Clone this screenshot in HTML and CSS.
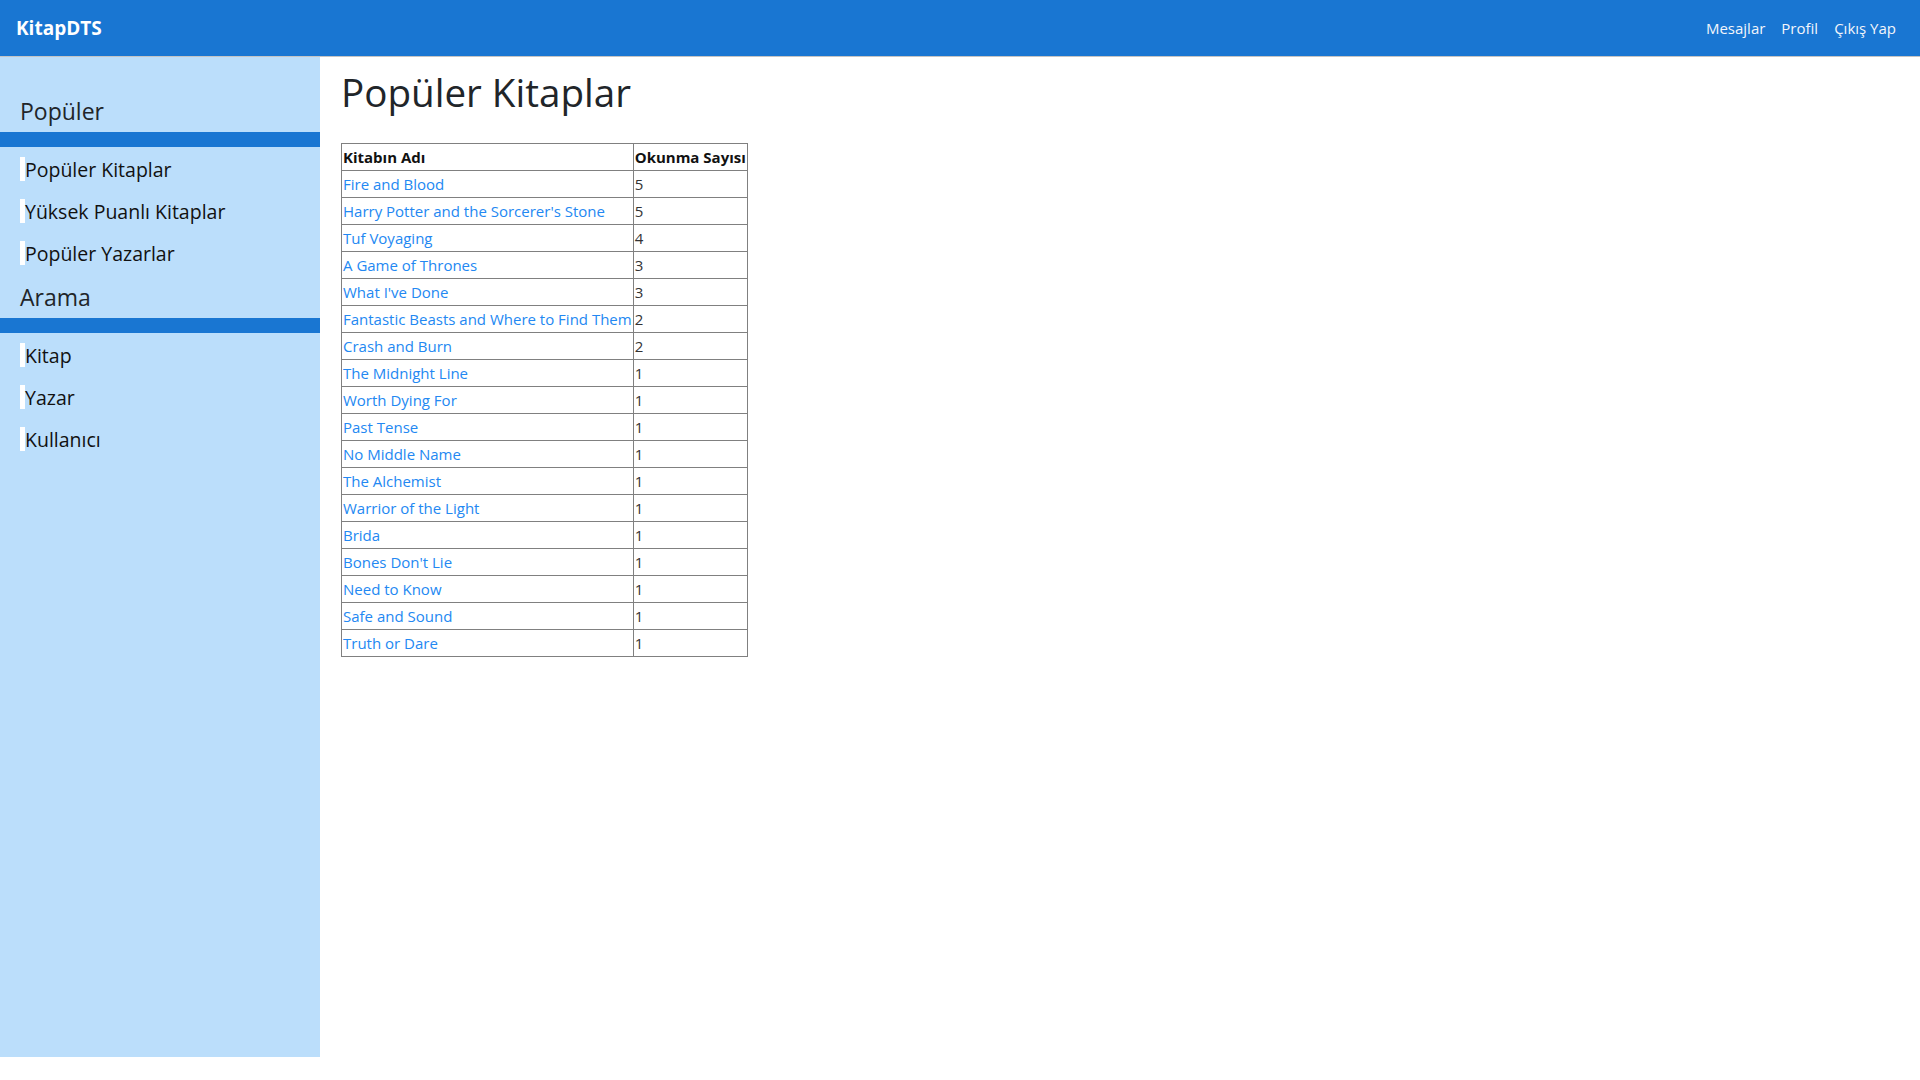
FILE: index.html
```html
<!DOCTYPE html>
<html lang="tr">
<head>
<meta charset="utf-8">
<title>KitapDTS</title>
<link rel="stylesheet" href="styles.css">
</head>
<body>
<nav class="navbar">
  <a class="brand" href="#">KitapDTS</a>
  <div class="nav-links">
    <a class="nav-link" href="#">Mesajlar</a>
    <a class="nav-link" href="#">Profil</a>
    <a class="nav-link" href="#">Çıkış Yap</a>
  </div>
</nav>
<div class="layout">
  <aside class="sidebar">
    <h4 class="side-title">Popüler</h4>
    <div class="side-bar"></div>
    <ul class="side-list">
      <li class="side-item">Popüler Kitaplar</li>
      <li class="side-item">Yüksek Puanlı Kitaplar</li>
      <li class="side-item">Popüler Yazarlar</li>
    </ul>
    <h4 class="side-title">Arama</h4>
    <div class="side-bar"></div>
    <ul class="side-list">
      <li class="side-item">Kitap</li>
      <li class="side-item">Yazar</li>
      <li class="side-item">Kullanıcı</li>
    </ul>
  </aside>
  <main class="content">
    <h1 class="page-title">Popüler Kitaplar</h1>
    <table class="books">
      <thead>
        <tr><th>Kitabın Adı</th><th>Okunma Sayısı</th></tr>
      </thead>
      <tbody>
        <tr><td><a href="#">Fire and Blood</a></td><td>5</td></tr>
        <tr><td><a href="#">Harry Potter and the Sorcerer's Stone</a></td><td>5</td></tr>
        <tr><td><a href="#">Tuf Voyaging</a></td><td>4</td></tr>
        <tr><td><a href="#">A Game of Thrones</a></td><td>3</td></tr>
        <tr><td><a href="#">What I've Done</a></td><td>3</td></tr>
        <tr><td><a href="#">Fantastic Beasts and Where to Find Them</a></td><td>2</td></tr>
        <tr><td><a href="#">Crash and Burn</a></td><td>2</td></tr>
        <tr><td><a href="#">The Midnight Line</a></td><td>1</td></tr>
        <tr><td><a href="#">Worth Dying For</a></td><td>1</td></tr>
        <tr><td><a href="#">Past Tense</a></td><td>1</td></tr>
        <tr><td><a href="#">No Middle Name</a></td><td>1</td></tr>
        <tr><td><a href="#">The Alchemist</a></td><td>1</td></tr>
        <tr><td><a href="#">Warrior of the Light</a></td><td>1</td></tr>
        <tr><td><a href="#">Brida</a></td><td>1</td></tr>
        <tr><td><a href="#">Bones Don't Lie</a></td><td>1</td></tr>
        <tr><td><a href="#">Need to Know</a></td><td>1</td></tr>
        <tr><td><a href="#">Safe and Sound</a></td><td>1</td></tr>
        <tr><td><a href="#">Truth or Dare</a></td><td>1</td></tr>
      </tbody>
    </table>
  </main>
</div>
</body>
</html>
```
FILE: styles.css
```css
* { box-sizing: border-box; }
html, body {
  margin: 0;
  padding: 0;
  background: #fff;
  color: #212529;
  font-family: "Open Sans", "Noto Sans", sans-serif;
  font-size: 16px;
}
a { text-decoration: none; }

.navbar {
  height: 57px;
  background: #1976d2;
  border-bottom: 1px solid #c4c4c4;
  display: flex;
  align-items: center;
  justify-content: space-between;
  padding: 0 16px;
}
.brand {
  color: #fff;
  font-weight: 700;
  font-size: 19px;
  line-height: 30px;
}
.nav-links { display: flex; }
.nav-link {
  color: #f2f5fb;
  font-size: 15px;
  padding: 0 8px;
  line-height: 24px;
}

.layout { display: flex; align-items: flex-start; }
.sidebar {
  width: 320px;
  height: 1000px;
  flex: none;
  background: #bbdefb;
  padding-top: 40px;
}
.side-title {
  margin: 0 0 6px;
  padding-left: 20px;
  font-size: 23px;
  line-height: 29px;
  font-weight: 400;
  color: #212529;
}
.side-bar {
  height: 15px;
  background: #1976d2;
  margin-bottom: 10px;
}
.side-list {
  list-style: none;
  margin: 0 0 1px;
  padding: 0;
}
.side-item {
  margin: 0 0 18px 20px;
  height: 24px;
  line-height: 25px;
  border-left: 5px solid #fff;
  font-size: 19.5px;
  color: #111;
}

.content {
  flex: 1;
  padding-left: 21px;
}
.page-title {
  margin: 11px 0 27px;
  font-size: 38.6px;
  line-height: 48px;
  font-weight: 400;
  color: #212529;
}
.books {
  border-collapse: collapse;
  border: 1px solid #808080;
  font-size: 15px;
}
.books th, .books td {
  border: 1px solid #808080;
  padding: 1px;
  line-height: 24px;
  text-align: left;
  white-space: nowrap;
}
.books th { font-weight: 700; color: #111; }
.books td { color: #333; }
.books td a { color: #2388f2; }
```
